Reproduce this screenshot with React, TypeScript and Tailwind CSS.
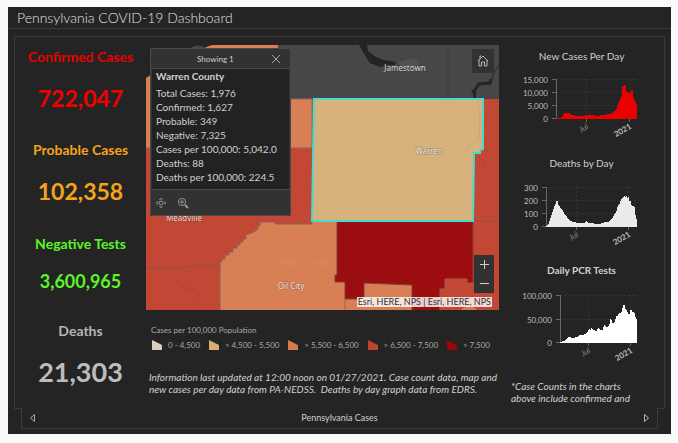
import { useState } from "react";

interface Stat {
  label: string;
  value: string;
  labelClass: string;
  valueClass: string;
}

interface ChartProps {
  title: string;
  titleClass?: string;
  axisX: number;
  ticks: { y: number; label: string }[];
  dates: { x: number; label: string }[];
  area: string;
  color: string;
}

const stats: Stat[] = [
  {
    label: "Confirmed Cases",
    value: "722,047",
    labelClass: "text-[#e60000] h-[33px]",
    valueClass: "text-[#f20000] text-[23px] h-[60px]",
  },
  {
    label: "Probable Cases",
    value: "102,358",
    labelClass: "text-[#f5a31a] h-[33px]",
    valueClass: "text-[#f5a31a] text-[23px] h-[61px]",
  },
  {
    label: "Negative Tests",
    value: "3,600,965",
    labelClass: "text-[#5cf526] h-[29px]",
    valueClass: "text-[#5cf526] text-[18px] h-[58px]",
  },
  {
    label: "Deaths",
    value: "21,303",
    labelClass: "text-[#b5b5b5] h-[33px]",
    valueClass: "text-[#bdbdbd] text-[27px] h-[60px]",
  },
];

const countyFacts = [
  "Total Cases: 1,976",
  "Confirmed: 1,627",
  "Probable: 349",
  "Negative: 7,325",
  "Cases per 100,000: 5,042.0",
  "Deaths: 88",
  "Deaths per 100,000: 224.5",
];

const legend = [
  { label: "0 - 4,500", color: "#d9cfba" },
  { label: "> 4,500 - 5,500", color: "#d9ae74" },
  { label: "> 5,500 - 6,500", color: "#d67a50" },
  { label: "> 6,500 - 7,500", color: "#bf4330" },
  { label: "> 7,500", color: "#990808" },
];

const charts: ChartProps[] = [
  {
    title: "New Cases Per Day",
    axisX: 57,
    ticks: [
      { y: 5, label: "15,000" },
      { y: 18, label: "10,000" },
      { y: 31, label: "5,000" },
      { y: 44, label: "0" },
    ],
    dates: [
      { x: 87, label: "Jul" },
      { x: 130, label: "2021" },
    ],
    area: "57,44 62,44 64,41 65,39 70,39 73,41 78,42 84,42 88,41 93,41 98,42 104,41 110,40 113,39 116,37 118,34 119,31 120,28 121,26 122,22 123,21 123,12 127,11 127,16 128,18 129,17 130,20 131,20 132,16 134,16 134,22 135,24 136,28 137,29 138,31 138,44",
    color: "#e90000",
  },
  {
    title: "Deaths by Day",
    axisX: 47,
    ticks: [
      { y: 6, label: "300" },
      { y: 19, label: "200" },
      { y: 32, label: "100" },
      { y: 45, label: "0" },
    ],
    dates: [
      { x: 77, label: "Jul" },
      { x: 129, label: "2021" },
    ],
    area: "47,45 50,42 52,36 54,30 55,27 56,23 57,24 57,20 59,20 59,24 61,25 62,28 64,30 66,34 68,36 70,39 74,41 80,42 86,42 87,40 88,40 89,42 100,43 106,41 109,41 111,39 113,38 115,34 117,31 118,29 119,24 121,22 122,18 124,16 126,15 126,17 128,14 128,17 130,16 130,20 132,20 132,24 134,26 134,25 136,27 136,32 137,36 138,39 138,45",
    color: "#ebebeb",
  },
  {
    title: "Daily PCR Tests",
    titleClass: "font-bold",
    axisX: 61,
    ticks: [
      { y: 7, label: "100,000" },
      { y: 31, label: "50,000" },
      { y: 54, label: "0" },
    ],
    dates: [
      { x: 89, label: "Jul" },
      { x: 131, label: "2021" },
    ],
    area: "61,54 65,53 67,51 70,49 73,50 78,49 81,47 84,47 88,45 90,41 92,43 92,40 94,42 98,43 99,39 101,42 104,42 105,36 107,39 110,38 112,29 113,35 116,34 117,28 119,28 120,25 123,24 124,17 126,17 126,21 127,20 128,24 129,23 130,28 131,24 132,20 133,24 135,24 136,26 137,31 138,31 138,54",
    color: "#ffffff",
  },
];

function StatList() {
  return (
    <section className="w-[131px] shrink-0 pt-[10px] text-center font-bold">
      {stats.map((stat) => (
        <div key={stat.label}>
          <h2 className={`text-[14px] leading-[20px] ${stat.labelClass}`}>{stat.label}</h2>
          <p className={`leading-[36px] ${stat.valueClass}`}>{stat.value}</p>
        </div>
      ))}
    </section>
  );
}

function MapShapes() {
  return (
    <svg viewBox="0 0 353 265" preserveAspectRatio="xMidYMid slice" className="block h-full w-full">
      <rect width="353" height="265" fill="#c24734" />
      <rect width="353" height="54" fill="#474749" />
      <path d="M0 0H132V54H0Z" fill="#232323" />
      <path d="M44 4Q48 -1 56 1L60 4Z" fill="#474749" />
      <path d="M0 33L6 29L50 6L66 0H132V54H166V103H0Z" fill="#d87f55" />
      <path d="M132 54H166V103H0" fill="none" stroke="#8b6b60" />
      <path d="M302 0V54" stroke="#3c3c3e" fill="none" />
      {/* Chautauqua Lake and Allegheny Reservoir */}
      <path d="M213 0H221L222 6L230 12L238 15L250 17L249 20L242 20L234 22L224 18L220 12Z" fill="#242427" />
      <path d="M252 17L268 13L274 19L258 25Z" fill="#525254" />
      <path d="M353 20L347 29L345 37" fill="none" stroke="#242427" />
      <path d="M345 34L344 38L333 39L329 45" fill="none" stroke="#242427" strokeWidth="3" />
      <path d="M325 45L330 44V54H327V49Z" fill="#242427" />
      {/* Venango */}
      <path
        d="M166 179H129V177H114V181H112V184L108 187L100 190V194H97V197H94V200H91V203H87V207H83V210H79V214H76V217H74V266H270V240L192 236V176H166Z"
        fill="#d87f55"
        stroke="#8a6557"
      />
      {/* Forest */}
      <path
        d="M191 176V230H189V237H199V254H218V238L266 240V266H294V244H299V234H321V238H327V176Z"
        fill="#9c0d0f"
        stroke="#81413b"
      />
      <path d="M270 266H327V238H321V234H299V244H294V266" fill="none" stroke="#8c5249" />
      <path d="M294 266V244H299V234H321V238H353V266Z" fill="#c24734" />
      <path d="M199 254V265" fill="none" stroke="#a06450" />
      <path d="M315 265Q323 257 331 265Z" fill="#d87f55" />
      <path d="M0 223H38L44 221H74M327 176H353" fill="none" stroke="#8c5249" />
      <path d="M30 235L40 243L49 246L54 253" fill="none" stroke="#a84334" />
      {/* Warren */}
      <path
        d="M168 54H337V104L334 105V108H328L327 176H166Z"
        fill="#d8b27c"
        stroke="#44dccb"
        strokeWidth="2"
      />
      <path d="M331 56L334 70L333 94L323 100L319 107M333 96H336" fill="none" stroke="#bd9870" opacity="0.5" />
      <path d="M329 109L336 116L340 124" fill="none" stroke="#a84334" opacity="0.6" />
      <g
        className="font-['Noto_Sans',sans-serif]"
        fontSize="8"
        textAnchor="middle"
        paintOrder="stroke"
        strokeOpacity="0.6"
      >
        <text x="259" y="26" fill="#d6d6d6" stroke="#3a3a3a">Jamestown</text>
        <text x="283" y="109" fill="#eeeae2" stroke="#6b5b42">Warren</text>
        <text x="38" y="176" fill="#e8dad6" stroke="#7b382f">Meadville</text>
        <text x="145" y="244" fill="#f2e6df" stroke="#8a5740">Oil City</text>
      </g>
      <text
        x="158"
        y="221"
        fontSize="8"
        textAnchor="middle"
        fill="#dc875f"
        className="font-['Noto_Sans',sans-serif]"
      >
        PENNSYLVANIA
      </text>
    </svg>
  );
}

function CountyPopup({ onClose }: { onClose: () => void }) {
  return (
    <div className="absolute left-1 top-[3px] w-[141px] border border-[#484848] bg-[#323232] text-[#d0d0d0]">
      <div className="flex h-5 items-center justify-between border-b border-[#484848] pl-[46px] pr-2">
        <span className="text-[8px]">Showing 1</span>
        <button type="button" aria-label="Close" onClick={onClose}>
          <svg viewBox="0 0 12 12" className="h-3 w-3" fill="none" stroke="#a5a5a5">
            <path d="M2 2L10 10M10 2L2 10" />
          </svg>
        </button>
      </div>
      <div className="mx-px h-[120px] bg-[#222222] px-1">
        <h3 className="text-[10px] font-bold leading-[14px]">Warren County</h3>
        <ul className="pt-[3px] text-[10px] leading-[14px]">
          {countyFacts.map((fact) => (
            <li key={fact} className="whitespace-nowrap">{fact}</li>
          ))}
        </ul>
      </div>
      <div className="flex h-[26px] items-center gap-[10px] border-t border-[#484848] pl-1">
        <button type="button" aria-label="Pan">
          <svg viewBox="0 0 12 12" className="h-3 w-3" fill="none" stroke="#8f8f8f">
            <path d="M6 1V11M1 6H11M4 3L6 1L8 3M4 9L6 11L8 9M3 4L1 6L3 8M9 4L11 6L9 8" strokeWidth="0.7" />
            <rect x="4.5" y="4.5" width="3" height="3" fill="#323232" strokeWidth="0.7" />
          </svg>
        </button>
        <button type="button" aria-label="Zoom to">
          <svg viewBox="0 0 12 12" className="h-3 w-3" fill="none" stroke="#9c9c9c">
            <circle cx="5" cy="5" r="3.6" strokeWidth="0.9" />
            <path d="M3 5H7M5 3V7" strokeWidth="0.9" />
            <path d="M8 8L11 11" strokeWidth="1.8" />
          </svg>
        </button>
      </div>
    </div>
  );
}

function CountyMap() {
  const [popupOpen, setPopupOpen] = useState(true);

  return (
    <div className="relative h-[265px] overflow-hidden">
      <MapShapes />
      {popupOpen && <CountyPopup onClose={() => setPopupOpen(false)} />}
      <button
        type="button"
        aria-label="Default extent"
        className="absolute right-[5px] top-1 flex h-6 w-[22px] items-center justify-center bg-[#323232]"
      >
        <svg viewBox="0 0 12 14" className="h-[14px] w-3" fill="none" stroke="#c4c4c4" strokeWidth="0.9">
          <path d="M1 7L6 2L11 7M2 6V12H4.5V8H7.5V12H10V6M3 5V2H4" />
        </svg>
      </button>
      <div className="absolute bottom-[17px] right-[5px] flex w-5 flex-col bg-[#323232]">
        <button type="button" aria-label="Zoom in" className="flex h-[19px] items-center justify-center">
          <svg viewBox="0 0 9 9" className="h-[9px] w-[9px]" stroke="#cfcfcf">
            <path d="M0 4.5H9M4.5 0V9" />
          </svg>
        </button>
        <button type="button" aria-label="Zoom out" className="flex h-[19px] items-center justify-center">
          <svg viewBox="0 0 9 9" className="h-[9px] w-[9px]" stroke="#cfcfcf">
            <path d="M0 4.5H9" />
          </svg>
        </button>
      </div>
      <p className="absolute bottom-[3px] right-[7px] bg-white/80 px-px text-[9px] leading-[10px] text-[#323232]">
        Esri, HERE, NPS | Esri, HERE, NPS
      </p>
    </div>
  );
}

function Legend() {
  return (
    <div className="px-[5px] pt-[14px] text-[8px] text-[#a9a9a9]">
      <h3 className="leading-[12px]">Cases per 100,000 Population</h3>
      <ul className="flex justify-between pr-1 pt-[3px]">
        {legend.map((item) => (
          <li key={item.label} className="flex items-center gap-[5px] whitespace-nowrap leading-[12px]">
            <svg viewBox="0 0 12 12" className="h-3 w-3">
              <path d="M1 1L11 6V11H1Z" fill={item.color} />
            </svg>
            {item.label}
          </li>
        ))}
      </ul>
    </div>
  );
}

function Chart({ title, titleClass = "", axisX, ticks, dates, area, color }: ChartProps) {
  const baseline = ticks[ticks.length - 1].y;

  return (
    <figure className="h-[107px]">
      <figcaption className={`text-center text-[10px] leading-[14px] text-[#d0d0d0] ${titleClass}`}>
        {title}
      </figcaption>
      <svg viewBox="0 0 165 82" className="mt-[11px] block h-[82px] w-full">
        {ticks.map((tick) => (
          <g key={tick.label}>
            <path d={`M${axisX} ${tick.y + 0.5}H138`} stroke="#363636" strokeDasharray="2 2" />
            <path d={`M${axisX - 4} ${tick.y + 0.5}H${axisX}`} stroke="#666" />
            <text x={axisX - 8} y={tick.y + 4} fontSize="8" textAnchor="end" fill="#bcbcbc">
              {tick.label}
            </text>
          </g>
        ))}
        {dates.map((date) => (
          <g key={date.label}>
            <path d={`M${date.x + 0.5} ${ticks[0].y}V${baseline}`} stroke="#363636" strokeDasharray="2 2" />
            <path d={`M${date.x + 0.5} ${baseline}V${baseline + 4}`} stroke="#666" />
            <text
              x={date.x + 3}
              y={baseline + 10}
              fontSize="8"
              textAnchor="end"
              fill={date.label === "2021" ? "#bcbcbc" : "#8a8a8a"}
              fontWeight={date.label === "2021" ? 700 : 400}
              transform={`rotate(-30 ${date.x + 3} ${baseline + 10})`}
            >
              {date.label}
            </text>
          </g>
        ))}
        <path d={`M${axisX + 0.5} ${ticks[0].y}V${baseline}`} stroke="#666" />
        <polygon points={area} fill={color} shapeRendering="crispEdges" />
        <path d={`M${axisX} ${baseline + 0.5}H138`} stroke={color} />
      </svg>
    </figure>
  );
}

export default function App() {
  return (
    <div className="min-h-screen bg-[#fafafa] pb-[9px] pl-2 pr-[7px] pt-[7px] font-['Lato',sans-serif]">
      <main className="bg-[#242424] pb-[5px]">
        <header className="h-[22px] border-b border-[#383838] px-[9px]">
          <h1 className="text-[14px] font-light leading-[21px] text-[#e0e0e0]">Pennsylvania COVID-19 Dashboard</h1>
        </header>

        <div className="px-[6px] pt-[7px]">
          <div className="flex h-[372px] border-x border-t border-[#3a3a3a]">
            <StatList />

            <section className="min-w-0 flex-1 pt-2">
              <CountyMap />
              <Legend />
              <p className="-mr-2 pl-[3px] pt-[20px] text-[10px] italic leading-[12px] text-[#d0d0d0]">
                Information last updated at 12:00 noon on 01/27/2021. Case count data, map and new cases per day
                data from PA-NEDSS.&nbsp; Deaths by day graph data from EDRS.
              </p>
            </section>

            <section className="w-[165px] shrink-0 pt-3">
              {charts.map((chart) => (
                <Chart key={chart.title} {...chart} />
              ))}
              <p className="pl-3 pr-6 pt-[10px] text-[10px] italic leading-[12px] text-[#d0d0d0]">
                *Case Counts in the charts above include confirmed and
              </p>
            </section>
          </div>

          <div className="flex">
            <div className="w-[7px] border-t border-[#3a3a3a]" />
            <nav className="flex h-[21px] flex-1 items-center justify-between border-x border-b border-[#3a3a3a] px-[7px]">
              <button type="button" aria-label="Previous view">
                <svg viewBox="0 0 7 10" className="h-[10px] w-[7px]" fill="none" stroke="#a5a5a5">
                  <path d="M5.5 1.5V8.5L1.5 5Z" />
                </svg>
              </button>
              <span className="text-[9px] text-[#cfcfcf]">Pennsylvania Cases</span>
              <button type="button" aria-label="Next view">
                <svg viewBox="0 0 7 10" className="h-[10px] w-[7px]" fill="none" stroke="#b5b5b5">
                  <path d="M1.5 1.5V8.5L5.5 5Z" />
                </svg>
              </button>
            </nav>
            <div className="w-[7px] border-t border-[#3a3a3a]" />
          </div>
        </div>
      </main>
    </div>
  );
}
